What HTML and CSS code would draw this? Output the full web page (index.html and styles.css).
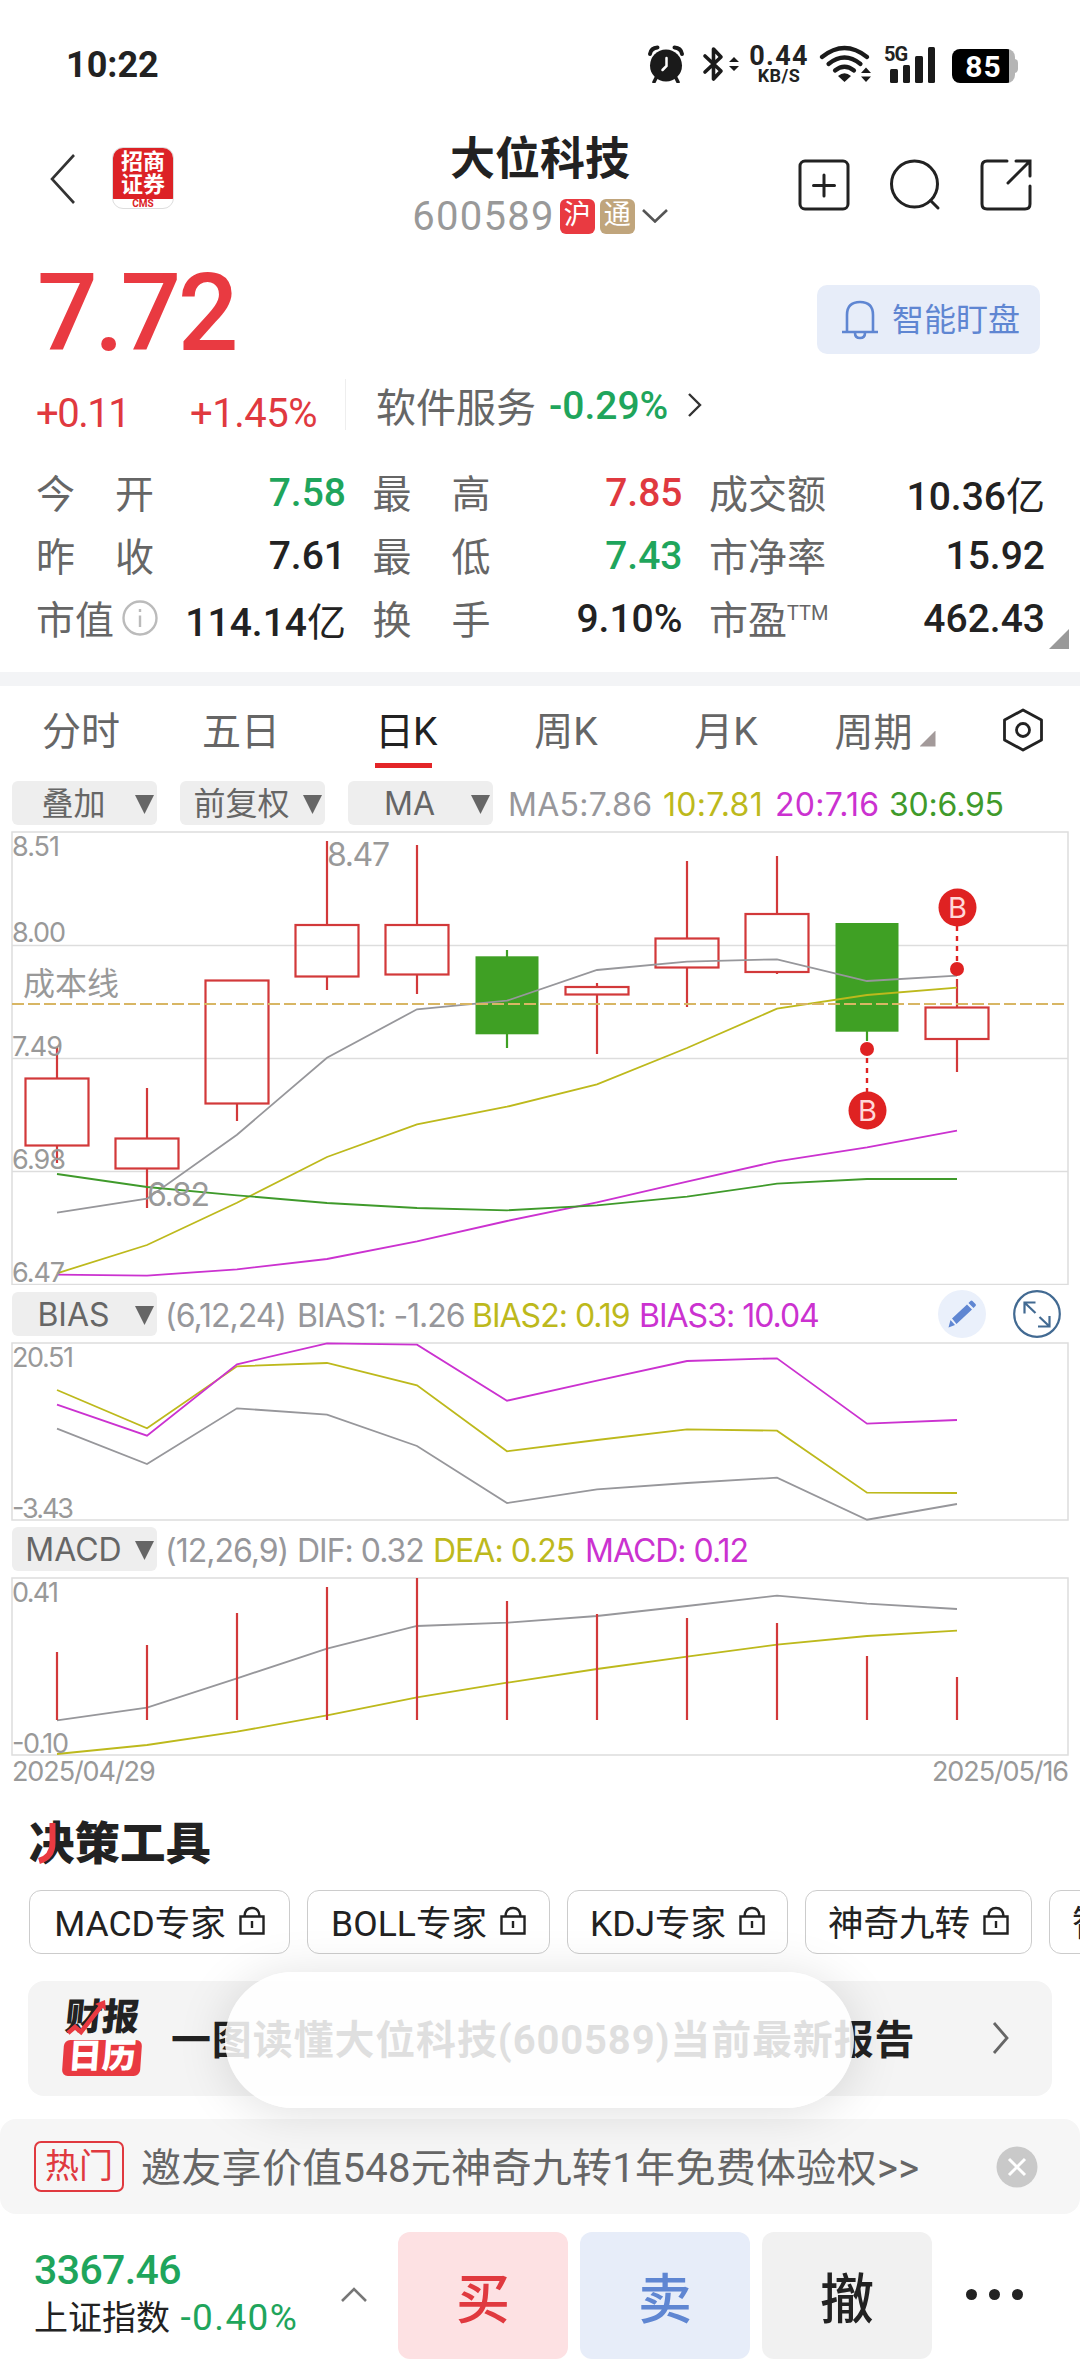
FILE: index.html
```html
<!DOCTYPE html>
<html lang="zh-CN">
<head>
  <meta charset="UTF-8">
  <meta name="viewport" content="width=device-width, initial-scale=1.0">
  <title>大位科技 600589</title>
  <link rel="stylesheet" href="styles.css">
</head>
<body>
  <div class="screen">
    <!-- 状态栏 -->
    <div class="status-bar">
      <span class="clock">10:22</span>
      <div class="status-icons">
        <svg class="ic-alarm" width="38" height="38" viewBox="0 0 38 38">
          <circle cx="19" cy="20.5" r="16" fill="#1a1a1a"/>
          <path d="M3 9 Q4 3 10.5 2.5M35 9 Q34 3 27.5 2.5" fill="none" stroke="#1a1a1a" stroke-width="4" stroke-linecap="round"/>
          <path d="M9 33 L7 37M29 33 L31 37" stroke="#1a1a1a" stroke-width="3.5" stroke-linecap="round"/>
          <path d="M19.5 13v8l-4 4" fill="none" stroke="#fff" stroke-width="2.5" stroke-linecap="round"/>
        </svg>
        <svg class="ic-bt" width="38" height="38" viewBox="0 0 38 38">
          <path d="M4 11 L20 26 L12.5 34 V4 L20 12 L4 27" fill="none" stroke="#1a1a1a" stroke-width="3.6" stroke-linejoin="round" stroke-linecap="round"/>
          <path d="M28 17l5-5 5 5zM28 21l5 5 5-5z" fill="#1a1a1a"/>
        </svg>
        <div class="net-speed"><b>0.44</b><small>KB/S</small></div>
        <svg class="ic-wifi" width="52" height="38" viewBox="0 0 52 38">
          <g fill="none" stroke="#1a1a1a" stroke-width="4.2" stroke-linecap="round">
            <path d="M3 12 Q25.500 -6 48 12"/>
            <path d="M9.500 19 Q25.500 6 41.500 19"/>
            <path d="M16 25.500 Q25.500 18 35 25.500"/>
          </g>
          <path d="M19 31 Q25.500 25.500 32 31 L25.500 37z" fill="#1a1a1a"/>
          <path d="M42 28l5-5.500 5 5.500zM42 31.500l5 5.500 5-5.500z" fill="#1a1a1a"/>
        </svg>
        <div class="signal">
          <b>5G</b>
          <i class="s1"></i><i class="s2"></i><i class="s3"></i><i class="s4"></i>
        </div>
        <div class="battery"><b>85</b></div>
      </div>
    </div>

    <!-- 顶部导航 -->
    <div class="nav">
      <div class="nav-left">
        <svg width="26" height="52" viewBox="0 0 26 52"><path d="M24 2 L2 26 L24 50" fill="none" stroke="#333" stroke-width="2.6"/></svg>
        <div class="broker"><span>招商<br>证券</span><em>CMS</em></div>
      </div>
      <div class="nav-title">
        <h1>大位科技</h1>
        <div class="code-row">
          <span class="code">600589</span>
          <span class="mark mark-hu">沪</span>
          <span class="mark mark-tong">通</span>
          <svg width="26" height="14" viewBox="0 0 26 14"><path d="M1 1 L13 12.5 L25 1" fill="none" stroke="#555" stroke-width="2.6"/></svg>
        </div>
      </div>
      <div class="nav-right">
        <svg width="52" height="52" viewBox="0 0 52 52"><rect x="2" y="2" width="48" height="48" rx="5"/><path d="M15.500 26.500h21M26 16v21"/></svg>
        <svg width="52" height="52" viewBox="0 0 52 52"><circle cx="25.500" cy="25" r="23"/><path d="M41.500 41.500 L49 49"/></svg>
        <svg width="52" height="52" viewBox="0 0 52 52"><path d="M27 2H7Q2 2 2 7V45Q2 50 7 50H45Q50 50 50 45V27M36 2H50V17M50 2 L28 24"/></svg>
      </div>
    </div>

    <!-- 报价 -->
    <div class="quote">
      <div class="price">7.72</div>
      <button class="watch-btn">
        <svg width="38" height="40" viewBox="0 0 38 40"><path d="M1 32H37M6 32V15Q6 2 19 2Q32 2 32 15V32M14 33Q14 38 19 38Q24 38 24 33" fill="none" stroke="#5f86d2" stroke-width="2.6"/></svg>
        <span>智能盯盘</span>
      </button>
    </div>
    <div class="change-row">
      <span class="red chg">+0.11</span>
      <span class="red pct">+1.45%</span>
      <div class="sector">
        <span>软件服务</span>
        <b class="green">-0.29%</b>
        <svg width="16" height="24" viewBox="0 0 16 24"><path d="M2 1 L13 12 L2 23" fill="none" stroke="#333" stroke-width="2.4"/></svg>
      </div>
    </div>

    <div class="stats">
      <div class="stat"><span class="wide">今开</span><b class="green">7.58</b></div>
      <div class="stat"><span class="wide">最高</span><b class="red">7.85</b></div>
      <div class="stat"><span>成交额</span><b>10.36<i>亿</i></b></div>
      <div class="stat"><span class="wide">昨收</span><b>7.61</b></div>
      <div class="stat"><span class="wide">最低</span><b class="green">7.43</b></div>
      <div class="stat"><span>市净率</span><b>15.92</b></div>
      <div class="stat">
        <span class="with-info">市值<svg width="36" height="36" viewBox="0 0 36 36"><circle cx="18" cy="18" r="16.5" fill="none" stroke="#bbb" stroke-width="2.4"/><path d="M18 15.500V27M18 9v3" stroke="#bbb" stroke-width="2.4"/></svg></span>
        <b>114.14<i>亿</i></b>
      </div>
      <div class="stat"><span class="wide">换手</span><b>9.10%</b></div>
      <div class="stat"><span>市盈<sup>TTM</sup></span><b>462.43</b></div>
      <i class="expand-corner"></i>
    </div>

    <div class="band"></div>

    <!-- 周期切换 -->
    <div class="tabs">
      <span>分时</span>
      <span>五日</span>
      <span class="active">日K</span>
      <span>周K</span>
      <span>月K</span>
      <span class="more">周期<i></i></span>
      <svg width="42" height="44" viewBox="0 0 42 44"><path d="M21 2 L39.500 12 V32 L21 42 L2.500 32 V12Z" fill="none" stroke="#222" stroke-width="2.800" stroke-linejoin="round"/><circle cx="21" cy="22" r="6.5" fill="none" stroke="#222" stroke-width="2.8"/></svg>
    </div>

    <!-- K线主图 -->
    <div class="legend main-legend">
      <span class="picker">叠加</span>
      <span class="picker">前复权</span>
      <span class="picker">MA</span>
      <span class="c-gray l1">MA5:7.86</span>
      <span class="c-yellow l2">10:7.81</span>
      <span class="c-purple l3">20:7.16</span>
      <span class="c-green l4">30:6.95</span>
    </div>
    <svg class="chart" width="1080" height="454" viewBox="0 -1 1080 454">
      <g class="grid">
        <path d="M12 113.500H1068M12 226.500H1068M12 339.500H1068"/>
        <rect x="12" y="0" width="1056" height="452.5"/>
      </g>
      <g class="up">
        <path d="M57 215V246M57 314V331M147 256V307M147 336V376M237 271V289M327 9V93M327 145V158M417 13V93M417 142V162M597 151V155M597 162V222M687 29V106M687 136V175M777 24V82M777 140V142M957 147V176M957 207V240"/>
        <rect x="25.5" y="246.5" width="63" height="67"/>
        <rect x="115.5" y="306.5" width="63" height="30"/>
        <rect x="205.5" y="148.5" width="63" height="123"/>
        <rect x="295.5" y="93" width="63" height="51.5"/>
        <rect x="385.5" y="93" width="63" height="49.5"/>
        <rect x="565.5" y="155" width="63" height="7.5"/>
        <rect x="655.5" y="106.5" width="63" height="29"/>
        <rect x="745.5" y="82" width="63" height="58"/>
        <rect x="925.5" y="175.5" width="63" height="31.5"/>
      </g>
      <g class="down">
        <path d="M507 118V216M867 199V209"/>
        <rect x="475.5" y="124.3" width="63" height="78"/>
        <rect x="835.5" y="91" width="63" height="108.7"/>
      </g>
      <polyline class="ln gray" points="57,380.7 147,366.7 237,302.7 327,225.7 417,177.3 507,168.7 597,138 687,129.7 777,127.3 867,149 957,143.7"/>
      <polyline class="ln yellow" points="57,441.3 147,413 237,370.7 327,325 417,292.3 507,274.7 597,252.3 687,216 777,176.7 867,163 957,155.7"/>
      <polyline class="ln purple" points="57,442.7 147,443.7 237,437.3 327,427 417,409.3 507,389 597,370.3 687,349.7 777,329.3 867,315.3 957,298.7"/>
      <polyline class="ln green" points="57,342 147,355 237,363.3 327,371 417,376 507,378.3 597,373.3 687,364.7 777,351.7 867,347 957,347"/>
      <path class="cost" d="M12 172H1066"/>
      <!-- 买入标记 -->
      <g class="buy">
        <path d="M957 94V132M867 226V262"/>
        <circle cx="957" cy="137" r="7"/>
        <circle cx="867" cy="217" r="7"/>
        <circle cx="957.5" cy="75.5" r="19"/>
        <circle cx="867.5" cy="278.5" r="19"/>
        <text x="957.5" y="85.8">B</text>
        <text x="867.5" y="288.8">B</text>
      </g>
      <g class="axis">
        <text x="12" y="23.5" textLength="48">8.51</text>
        <text x="12" y="110" textLength="54">8.00</text>
        <text x="12" y="223.5" textLength="51">7.49</text>
        <text x="12" y="336.5" textLength="54">6.98</text>
        <text x="12" y="449.5" textLength="53">6.47</text>
      </g>
      <g class="note">
        <text x="327" y="34" textLength="63">8.47</text>
        <text x="147" y="374" textLength="63">6.82</text>
        <text x="23" y="162.5" textLength="96">成本线</text>
      </g>
    </svg>

    <!-- BIAS -->
    <div class="legend bias-legend">
      <span class="picker">BIAS</span>
      <span class="c-gray l1">(6,12,24)</span>
      <span class="c-gray l2">BIAS1: -1.26</span>
      <span class="c-yellow l3">BIAS2: 0.19</span>
      <span class="c-purple l4">BIAS3: 10.04</span>
      <div class="legend-tools">
        <svg width="48" height="48" viewBox="0 0 48 48"><circle cx="24" cy="24" r="24" fill="#eaf0fb"/><path d="M10.500 37.500l2-7.500 4.500 5zM14 28.500L29 14.500l5 5L18.500 34zM30.500 13l2-2q1-1 2 0l3 3q1 1 0 2l-2 2z" fill="#5f86d2"/></svg>
        <svg width="48" height="48" viewBox="0 0 48 48"><circle cx="24" cy="24" r="22.8" fill="none" stroke="#426a92" stroke-width="2.2"/><path d="M11.500 23.500V12.500H22.500M12 13L22.500 23M36.500 26V36.500H25M36 36L26.500 27" fill="none" stroke="#426a92" stroke-width="2.200"/></svg>
      </div>
    </div>
    <svg class="chart" width="1080" height="179" viewBox="0 -1 1080 179">
      <g class="grid"><rect x="12" y="0" width="1056" height="177"/></g>
      <polyline class="ln gray" points="57,85.7 147,121 237,65.3 327,71.7 417,103 507,160 597,146.3 687,140 777,134.7 867,176.7 957,161"/>
      <polyline class="ln yellow" points="57,47 147,85.3 237,23.3 327,20 417,42.3 507,108.3 597,97 687,86.3 777,87.7 867,149.7 957,150"/>
      <polyline class="ln purple" points="57,61.7 147,92.7 237,21.3 327,.3 417,1.7 507,57.7 597,37.7 687,18 777,15.3 867,80.7 957,77"/>
      <g class="axis">
        <text x="12" y="23.5" textLength="62">20.51</text>
        <text x="12" y="174.5" textLength="62">-3.43</text>
      </g>
    </svg>

    <!-- MACD -->
    <div class="legend macd-legend">
      <span class="picker">MACD</span>
      <span class="c-gray l1">(12,26,9)</span>
      <span class="c-gray l2">DIF: 0.32</span>
      <span class="c-yellow l3">DEA: 0.25</span>
      <span class="c-purple l4">MACD: 0.12</span>
    </div>
    <svg class="chart" width="1080" height="179" viewBox="0 -1 1080 179">
      <g class="grid"><rect x="12" y="0" width="1056" height="177"/></g>
      <polyline class="ln gray" points="57,142.3 147,129.7 237,100.3 327,70.7 417,48 507,44.7 597,38 687,28 777,17.7 867,25.7 957,31"/>
      <polyline class="ln yellow" points="57,176 147,167 237,153.7 327,137.3 417,119.3 507,104.7 597,91 687,78.7 777,66.7 867,58 957,52.7"/>
      <path class="macd-bars" d="M57 142V74M147 142V67M237 142V35M327 142V9M417 142V0M507 142V23M597 142V36M687 142V40M777 142V45M867 142V78M957 142V99"/>
      <g class="axis">
        <text x="12" y="23.5" textLength="47">0.41</text>
        <text x="12" y="174.5" textLength="57">-0.10</text>
      </g>
    </svg>
    <div class="dates"><span>2025/04/29</span><span>2025/05/16</span></div>

    <!-- 决策工具 -->
    <h2 class="tools-title">决策工具
      <svg width="24" height="44" viewBox="0 0 24 44"><path d="M14.500 0V20Q14.500 34 1 38" fill="none" stroke="#e93a41" stroke-width="6"/></svg>
    </h2>
    <div class="tools">
      <span class="tool t1">MACD专家<svg class="lock" width="26" height="29" viewBox="0 0 26 29"><path d="M1.500 10.500H24.500V27.500H1.500ZM5.500 10Q6 2 13 2Q20 2 20.500 10M13 15V22"/></svg></span>
      <span class="tool t2">BOLL专家<svg class="lock" width="26" height="29" viewBox="0 0 26 29"><path d="M1.500 10.500H24.500V27.500H1.500ZM5.500 10Q6 2 13 2Q20 2 20.500 10M13 15V22"/></svg></span>
      <span class="tool t3">KDJ专家<svg class="lock" width="26" height="29" viewBox="0 0 26 29"><path d="M1.500 10.500H24.500V27.500H1.500ZM5.500 10Q6 2 13 2Q20 2 20.500 10M13 15V22"/></svg></span>
      <span class="tool t4">神奇九转<svg class="lock" width="26" height="29" viewBox="0 0 26 29"><path d="M1.500 10.500H24.500V27.500H1.500ZM5.500 10Q6 2 13 2Q20 2 20.500 10M13 15V22"/></svg></span>
      <span class="tool t5">智能</span>
    </div>

    <div class="report">
      <div class="report-logo">
        <b>财报</b>
        <em>日历</em>
        <svg width="46" height="40" viewBox="0 0 46 40"><path d="M3 33L10 27L16 32L37 5" fill="none" stroke="#e93a41" stroke-width="4.500"/><path d="M30 4L40 0L41 10Z" fill="#e93a41"/></svg>
      </div>
      <strong>一图读懂大位科技(600589)当前最新报告</strong>
      <svg class="arrow" width="18" height="32" viewBox="0 0 18 32"><path d="M2 1L15 16L2 31" fill="none" stroke="#666" stroke-width="2.8"/></svg>
      <div class="toast"></div>
    </div>

    <div class="promo">
      <span class="hot">热门</span>
      <span class="promo-text">邀友享价值548元神奇九转1年免费体验权&gt;&gt;</span>
      <svg width="42" height="42" viewBox="0 0 42 42"><circle cx="21" cy="21" r="20.5" fill="#c9c9c9"/><path d="M13 13L29 29M29 13L13 29" stroke="#fff" stroke-width="3"/></svg>
    </div>

    <!-- 底部交易栏 -->
    <div class="trade-bar">
      <div class="index">
        <b>3367.46</b>
        <p>上证指数 <span>-0.40%</span></p>
      </div>
      <svg class="up-arrow" width="28" height="16" viewBox="0 0 28 16"><path d="M2 14L14 2L26 14" fill="none" stroke="#777" stroke-width="2.6"/></svg>
      <button class="buy-btn">买</button>
      <button class="sell-btn">卖</button>
      <button class="cancel-btn">撤</button>
      <div class="dots"><i></i><i></i><i></i></div>
    </div>
  </div>
</body>
</html>
```
FILE: styles.css
```css
* {
  box-sizing: border-box;
}
body {
  margin: 0;
  background: #fff;
  color: #222;
  font-family: Roboto, "Noto Sans CJK SC", sans-serif;
}
h1, h2, p {
  margin: 0;
}
svg {
  display: block;
  flex: none;
}
em, i {
  font-style: normal;
}
button {
  border: none;
  padding: 0;
  font-family: inherit;
}
.screen {
  width: 1080px;
  height: 2376px;
  overflow: hidden;
}
.red { color: #e0393f; }
.green { color: #1fa55c; }

/* 状态栏 */
.status-bar {
  height: 131px;
  padding: 45px 65px 0 66px;
  display: flex;
  justify-content: space-between;
}
.clock {
  font-size: 36px;
  font-weight: 700;
  line-height: 40px;
}
.status-icons {
  display: flex;
  height: 38px;
}
.ic-bt { margin-left: 16px; }
.net-speed {
  width: 60px;
  margin-left: 10px;
  display: flex;
  flex-direction: column;
  align-items: center;
}
.net-speed b {
  height: 22px;
  font-size: 27px;
  line-height: 23px;
  letter-spacing: 1.3px;
}
.net-speed small {
  font-size: 18px;
  font-weight: 700;
  line-height: 18px;
  letter-spacing: 0.5px;
}
.ic-wifi { margin-left: 10px; }
.signal {
  position: relative;
  width: 51px;
  margin-left: 13px;
  padding-left: 6px;
  display: flex;
  align-items: flex-end;
  gap: 5px;
}
.signal b {
  position: absolute;
  left: 0;
  top: 0;
  font-size: 20px;
  line-height: 19px;
  letter-spacing: -1px;
}
.signal i {
  width: 7.5px;
  background: #1a1a1a;
  border-radius: 1.5px;
}
.s1 { height: 14px; }
.s2 { height: 18px; }
.s3 { height: 27px; }
.s4 { height: 36px; }
.battery {
  position: relative;
  width: 63px;
  height: 34px;
  margin: 4px 0 0 17px;
  border-radius: 8px;
  background: linear-gradient(to right, #000 57px, #b5b5b5 57px);
  color: #fff;
  text-align: center;
}
.battery::after {
  content: "";
  position: absolute;
  right: -3px;
  top: 10px;
  width: 4px;
  height: 14px;
  border-radius: 0 4px 4px 0;
  background: #b5b5b5;
}
.battery b {
  font-size: 30px;
  line-height: 35px;
  letter-spacing: 1px;
}

/* 顶部导航 */
.nav {
  height: 119px;
  display: grid;
  grid-template-columns: 360px 1fr 360px;
}
.nav-left {
  display: flex;
  align-items: flex-start;
  padding: 16px 0 0 50px;
}
.nav-left svg { margin-top: 6px; }
.broker {
  width: 62px;
  height: 62px;
  margin-left: 36px;
  border: 1px solid #ddd;
  border-radius: 11px;
  overflow: hidden;
  background: #fff;
  text-align: center;
}
.broker span {
  display: block;
  height: 51px;
  padding-top: 2px;
  background: #dc2226;
  color: #fff;
  font-size: 22px;
  font-weight: 700;
  line-height: 23px;
}
.broker em {
  display: block;
  font-size: 10px;
  line-height: 10px;
  font-weight: 700;
  color: #dc2226;
}
.nav-title {
  display: flex;
  flex-direction: column;
  align-items: center;
}
h1 {
  margin-top: 2px;
  font-size: 45px;
  line-height: 54px;
  font-weight: 700;
}
.code-row {
  display: flex;
  align-items: center;
  height: 38px;
  margin-top: 10px;
}
.code {
  font-size: 40px;
  letter-spacing: 1.3px;
  color: #999;
}
.mark {
  width: 35px;
  height: 35px;
  margin-left: 5px;
  border-radius: 6px;
  color: #fff;
  font-size: 27px;
  line-height: 33px;
  text-align: center;
}
.mark-hu { background: #e93a41; }
.mark-tong { background: #c0a57c; }
.code-row svg { margin-left: 7px; }
.nav-right {
  display: flex;
  gap: 39px;
  padding: 28px 0 0 78px;
}
.nav-right svg {
  fill: none;
  stroke: #222;
  stroke-width: 3;
  stroke-linecap: round;
}

/* 报价 */
.quote {
  height: 120px;
  padding: 0 40px 0 37px;
  display: flex;
  justify-content: space-between;
}
.price {
  font-size: 107px;
  line-height: 127px;
  letter-spacing: -3.5px;
  font-weight: 500;
  color: #e93a41;
}
.watch-btn {
  width: 223px;
  height: 69px;
  margin-top: 35px;
  padding-left: 24px;
  border-radius: 10px;
  background: #e7edf9;
  color: #5f86d2;
  display: flex;
  align-items: center;
  gap: 13px;
  font-size: 32px;
}
.watch-btn span { padding-bottom: 5px; }
.change-row {
  height: 94px;
  padding: 9px 0 0 36px;
  display: flex;
}
.change-row > span {
  margin-top: 12px;
  font-size: 40px;
  line-height: 46px;
}
.chg {
  width: 154px;
  letter-spacing: -1.5px;
}
.pct {
  width: 155px;
  letter-spacing: -0.5px;
}
.sector {
  height: 51px;
  padding-left: 30px;
  border-left: 1px solid #eee;
  display: flex;
  align-items: center;
  font-size: 40px;
  color: #666;
}
.sector b {
  margin: 2px 19px 0 13px;
  font-weight: 500;
  font-size: 39px;
}

.stats {
  position: relative;
  height: 208px;
  padding: 0 36px;
  display: grid;
  grid-template-columns: 310px 310px 336px;
  column-gap: 26.5px;
  grid-auto-rows: 63px;
}
.stat {
  display: flex;
  justify-content: space-between;
  align-items: center;
  height: 58px;
  font-size: 39px;
  color: #666;
}
.stat span {
  padding-bottom: 5px;
  white-space: nowrap;
}
.stat .wide {
  letter-spacing: 40px;
}
.stat .with-info {
  display: flex;
  align-items: center;
  gap: 8px;
}
.with-info svg { margin-top: 3px; }
.stat b {
  font-weight: 500;
  color: #222;
}
.stat b i { font-weight: 400; }
.stat b.red { color: #e0393f; }
.stat b.green { color: #1fa55c; }
.stat sup {
  font-size: 20px;
  line-height: 0;
}
.expand-corner {
  position: absolute;
  left: 1049px;
  top: 165px;
  width: 20px;
  height: 20px;
  background: #999;
  clip-path: polygon(100% 0, 100% 100%, 0 100%);
}
.band {
  height: 14px;
  background: #f3f4f6;
}

/* 周期切换 */
.tabs {
  height: 95px;
  display: grid;
  grid-template-columns: 162px 158px 167px 158px 162px 156px 120px;
  justify-items: center;
  align-items: center;
  font-size: 39px;
  color: #666;
}
.tabs span {
  height: 68px;
  line-height: 65px;
}
.tabs svg { margin-bottom: 7px; }
.tabs .active {
  width: 57px;
  white-space: nowrap;
  color: #222;
  border-bottom: 5px solid #e32528;
  letter-spacing: -1px;
}
.more {
  display: flex;
  align-items: center;
  gap: 7px;
}
.more i {
  width: 16px;
  height: 16px;
  margin-top: 10px;
  background: #a39a9a;
  clip-path: polygon(100% 0, 100% 100%, 0 100%);
}

/* 指标说明行 */
.legend {
  height: 44px;
  padding-left: 12px;
  display: flex;
  align-items: center;
  font-family: Inter, "Noto Sans CJK SC", sans-serif;
  font-size: 32px;
  white-space: nowrap;
}
.picker {
  position: relative;
  width: 145px;
  height: 44px;
  margin-right: 23px;
  padding-right: 22px;
  border-radius: 6px;
  background: #eee;
  color: #666;
  line-height: 46px;
  text-align: center;
}
.picker::after {
  content: "";
  position: absolute;
  right: 3px;
  top: 14px;
  width: 19px;
  height: 19px;
  background: #666;
  clip-path: polygon(0 0, 100% 0, 50% 100%);
}
.c-gray { color: #97979b; }
.c-yellow { color: #bdb91c; }
.c-purple { color: #cb32d0; }
.c-green { color: #3f9a2b; }
.main-legend .picker + .c-gray { margin-left: -8px; }
.legend > .l1, .legend > .l2, .legend > .l3, .legend > .l4 {
  flex: none;
  padding-top: 2px;
  letter-spacing: -1px;
}
.main-legend > .l1, .main-legend > .l2, .main-legend > .l3 { letter-spacing: 0.3px; }
.main-legend > .l4 { letter-spacing: -0.2px; }
.main-legend .l1 { width: 155px; }
.main-legend .l2 { width: 112px; }
.main-legend .l3 { width: 114px; }
.bias-legend, .macd-legend { height: 46px; }
.bias-legend .picker, .macd-legend .picker { margin-right: 8px; }
.bias-legend .l1, .macd-legend .l1 { width: 132px; }
.bias-legend .l2 { width: 175px; }
.bias-legend .l3 { width: 167px; }
.macd-legend .l2 { width: 136px; }
.macd-legend .l3 { width: 152px; }
.legend-tools {
  display: flex;
  gap: 27px;
  margin: 0 19px 0 auto;
}

/* 图表 */
.main-legend { margin-bottom: 6px; }
.bias-legend { margin: 6px 0 5px; }
.macd-legend { margin: 5px 0; }
.grid path, .grid rect {
  fill: none;
  stroke: #ddd;
  stroke-width: 1.5;
}
.up path, .up rect {
  fill: none;
  stroke: #d2393a;
  stroke-width: 2.2;
}
.down path {
  stroke: #3fa024;
  stroke-width: 2.2;
}
.down rect { fill: #3fa024; }
.ln {
  fill: none;
  stroke-width: 1.8;
}
.ln.gray { stroke: #97979b; }
.ln.yellow { stroke: #bdb91c; }
.ln.purple { stroke: #cb32d0; }
.ln.green { stroke: #3f9a2b; }
.cost {
  stroke: #d8b664;
  stroke-width: 2;
  stroke-dasharray: 12 4;
}
.buy path {
  stroke: #df2222;
  stroke-width: 2.4;
  stroke-dasharray: 5 5;
}
.buy circle { fill: #df2222; }
.buy text {
  fill: #ffd9d9;
  font-family: Inter, sans-serif;
  font-size: 29px;
  text-anchor: middle;
}
.axis text {
  fill: #999;
  font-family: Inter, sans-serif;
  font-size: 27px;
}
.note text {
  fill: #999;
  font-family: Inter, "Noto Sans CJK SC", sans-serif;
  font-size: 32px;
}
.macd-bars {
  stroke: #d2393a;
  stroke-width: 2.2;
}
.dates {
  height: 34px;
  padding: 0 12px;
  display: flex;
  justify-content: space-between;
  font-family: Inter, sans-serif;
  font-size: 27px;
  line-height: 32px;
  letter-spacing: -1.1px;
  color: #999;
}

/* 决策工具 */
.tools-title {
  position: relative;
  height: 100px;
  padding: 28px 0 0 29px;
  font-size: 45.5px;
  line-height: 54px;
  font-weight: 900;
}
.tools-title svg {
  position: absolute;
  left: 38px;
  top: 33px;
}
.tools {
  width: 1080px;
  height: 64px;
  padding-left: 29px;
  display: flex;
  gap: 17px;
  overflow: hidden;
}
.tool {
  flex: none;
  display: flex;
  justify-content: center;
  align-items: center;
  gap: 13px;
  padding-bottom: 3px;
  border: 1.5px solid #ccc;
  border-radius: 12px;
  font-size: 35.5px;
}
.t1 { width: 261px; }
.t2 { width: 243px; }
.t3 { width: 221px; }
.t4 { width: 227px; }
.t5 {
  width: 220px;
  justify-content: flex-start;
  padding-left: 22px;
}
.lock {
  fill: none;
  stroke: #222;
  stroke-width: 2.4;
}
.report {
  position: relative;
  width: 1024px;
  height: 115px;
  margin: 27px 28px 23px;
  padding-left: 35px;
  border-radius: 16px;
  background: #f4f4f4;
  display: flex;
  align-items: center;
}
.report-logo {
  position: relative;
  width: 80px;
  height: 77px;
  margin-right: 28px;
}
.report-logo b {
  display: block;
  height: 40px;
  padding-left: 2px;
  font-size: 37px;
  line-height: 36px;
  font-weight: 900;
  transform: skewX(-6deg);
}
.report-logo em {
  display: block;
  width: 78px;
  height: 36px;
  border-radius: 6px;
  background: #e93a41;
  color: #fff;
  font-size: 34px;
  line-height: 33px;
  font-weight: 900;
  text-align: center;
  transform: skewX(-4deg);
}
.report-logo svg {
  position: absolute;
  left: 2px;
  top: 0;
}
.report strong {
  padding-bottom: 4px;
  font-size: 40px;
  font-weight: 700;
  letter-spacing: 0.85px;
  white-space: nowrap;
}
.report .arrow {
  position: absolute;
  right: 42px;
  top: 41px;
}
/* 淡出中的提示框 */
.toast {
  position: absolute;
  left: 197px;
  top: -9px;
  width: 629px;
  height: 136px;
  border-radius: 68px;
  background: rgba(255, 255, 255, 0.86);
  box-shadow: 0 4px 50px rgba(0, 0, 0, 0.13);
}
.promo {
  height: 95px;
  padding: 0 42px 0 34px;
  border-radius: 16px;
  background: #f6f6f6;
  display: flex;
  align-items: center;
}
.hot {
  width: 90px;
  height: 51px;
  border: 2px solid #e0393f;
  border-radius: 7px;
  color: #e0393f;
  font-size: 34px;
  line-height: 46px;
  text-align: center;
}
.promo-text {
  margin: 0 auto 0 17px;
  padding-bottom: 4px;
  font-size: 40px;
  letter-spacing: 0.3px;
  color: #666;
  white-space: nowrap;
}

/* 底部交易栏 */
.trade-bar {
  height: 162px;
  padding: 18px 0 0 34px;
  display: flex;
}
.index {
  width: 305px;
  padding-top: 15px;
}
.index b {
  display: block;
  font-size: 41px;
  line-height: 46px;
  font-weight: 500;
  letter-spacing: -0.6px;
  color: #1fa55c;
}
.index p {
  font-size: 34px;
  line-height: 50px;
  white-space: nowrap;
}
.index p span {
  margin-left: 2px;
  font-size: 37px;
  line-height: 40px;
  letter-spacing: 1.4px;
  color: #1fa55c;
}
.up-arrow { margin: 55px 30px 0 1px; }
.trade-bar button {
  width: 170px;
  height: 127px;
  margin-right: 12px;
  border-radius: 12px;
  font-size: 54px;
  font-weight: 500;
}
.buy-btn { background: #fde1e3; color: #e0393f; }
.sell-btn { background: #e7edf9; color: #5f86d2; }
.cancel-btn { background: #f1f1f1; color: #222; }
.dots {
  display: flex;
  gap: 12px;
  margin: 57px 0 0 22px;
}
.dots i {
  width: 11px;
  height: 11px;
  border-radius: 50%;
  background: #222;
}
```
